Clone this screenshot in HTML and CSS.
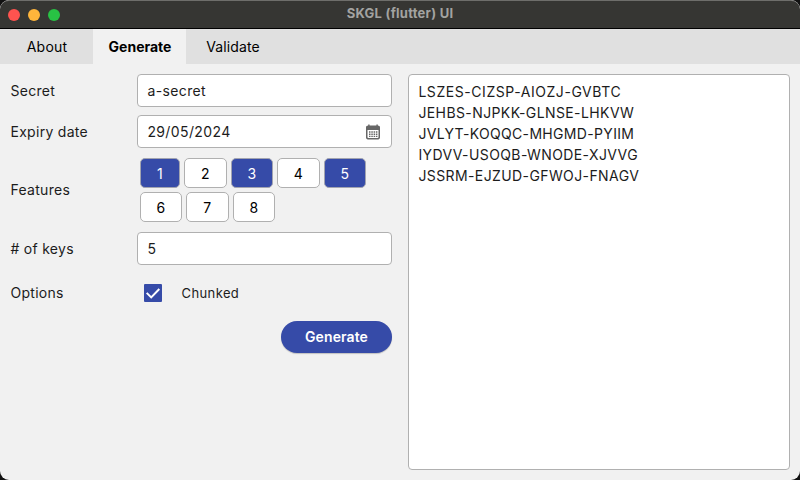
FILE: index.html
```html
<!DOCTYPE html>
<html lang="en">
<head>
<meta charset="utf-8">
<title>SKGL (flutter) UI</title>
<link rel="stylesheet" href="styles.css">
</head>
<body>
<div class="window">
  <header class="titlebar">
    <div class="lights"><i class="close"></i><i class="minimize"></i><i class="zoom"></i></div>
    <span class="title">SKGL (flutter) UI</span>
  </header>
  <nav class="tabs">
    <span class="tab about">About</span>
    <span class="tab active">Generate</span>
    <span class="tab validate">Validate</span>
  </nav>
  <main class="content">
    <form class="form">
      <span class="label">Secret</span>
      <div class="field">a-secret</div>
      <span class="label">Expiry date</span>
      <div class="field date"><span>29/05/2024</span>
        <svg class="calendar" width="14" height="16" viewBox="0 0 14 16">
          <path fill="#666" fill-rule="evenodd" d="M2.2 1.6V.4h1.4v1.2h6.8V.4h1.4v1.2c1.3 0 2.2.7 2.2 1.8v10.2c0 1-.8 1.8-1.8 1.8H1.8c-1 0-1.8-.8-1.8-1.8V3.4C0 2.300.9 1.600 2.200 1.600zM1.500 6v7.200c0 .5.300.8.8.8h9.400c.5 0 .8-.3.8-.8V6z"/>
          <path fill="#666" d="M3 7.300h1.500v1.400H3zM5.300 7.300h1.500v1.400H5.300zM7.600 7.300h1.500v1.400H7.600zM9.900 7.300h1.500v1.400H9.900zM3 9.500h1.500v1.400H3zM5.300 9.500h1.500v1.400H5.300zM7.600 9.500h1.500v1.400H7.600zM9.900 9.500h1.500v1.400H9.900zM3 11.700h1.500v1.400H3zM5.300 11.700h1.500v1.400H5.300zM7.600 11.700h1.500v1.400H7.600zM9.900 11.700h1.500v1.400H9.900z"/>
        </svg>
      </div>
      <span class="label features-label">Features</span>
      <div class="features">
        <span class="chip one on">1</span><span class="chip">2</span><span class="chip on">3</span><span class="chip">4</span><span class="chip on">5</span>
        <span class="chip">6</span><span class="chip">7</span><span class="chip">8</span>
      </div>
      <span class="label"># of keys</span>
      <div class="field">5</div>
      <span class="label options-label">Options</span>
      <div class="option">
        <svg class="check" width="18" height="18" viewBox="0 0 18 18"><rect width="18" height="18" rx="1" fill="#364ba8"/><path d="M2.700 8.900l4.500 4.500 8.100-8.400" fill="none" stroke="#fff" stroke-width="2"/></svg>
        <span>Chunked</span>
      </div>
      <span class="submit">Generate</span>
    </form>
    <div class="output">
      <div class="key-first">LSZES-CIZSP-AIOZJ-GVBTC</div>
      <div>JEHBS-NJPKK-GLNSE-LHKVW</div>
      <div class="key-narrow">JVLYT-KOQQC-MHGMD-PYIIM</div>
      <div>IYDVV-USOQB-WNODE-XJVVG</div>
      <div>JSSRM-EJZUD-GFWOJ-FNAGV</div>
    </div>
  </main>
</div>
</body>
</html>
```
FILE: styles.css
```css
* { box-sizing: border-box; }
body {
  margin: 0;
  background: #111;
  font-family: Inter, sans-serif;
  font-size: 14px;
  color: #1c1c1c;
}
.window {
  display: flex;
  flex-direction: column;
  height: 480px;
  overflow: hidden;
  border-radius: 9px;
  background: #f1f1f1;
}
.titlebar {
  display: grid;
  grid-template-columns: 1fr auto 1fr;
  align-items: center;
  height: 29px;
  background: #363633;
  border-top: 1px solid #6e6e6b;
  border-bottom: 1px solid #000;
  border-radius: 9px 9px 0 0;
}
.lights { display: flex; gap: 8px; padding-left: 8px; }
.lights i { width: 12px; height: 12px; border-radius: 50%; }
.close { background: #ff534f; }
.minimize { background: #ffb53b; }
.zoom { background: #28c244; }
.title {
  padding-bottom: 3px;
  font-size: 13px;
  font-weight: 700;
  letter-spacing: .25px;
  color: #a3a3a1;
}
.tabs {
  display: flex;
  height: 35px;
  background: #e0e0e0;
  color: #000;
}
.tab { display: flex; align-items: center; justify-content: center; }
.about { width: 93px; letter-spacing: .2px; padding-left: 1px; }
.active { width: 93px; padding-left: 1px; background: #f1f1f1; font-weight: 700; }
.validate { width: 93px; letter-spacing: .1px; padding-left: 1px; }
.content {
  flex: 1;
  display: grid;
  grid-template-columns: 382px 382px;
  gap: 16px;
  padding: 10px;
}
.form {
  display: grid;
  grid-template-columns: 127px 255px;
  grid-template-rows: 41px 43px 74px 42px 47px 43px;
  align-items: start;
}
.label { padding-left: .5px; letter-spacing: .28px; line-height: 33px; }
.features-label { line-height: 64px; }
.options-label { line-height: 38px; }
.field, .output {
  background: #fff;
  border: 1px solid #b0b0b0;
  border-radius: 4px;
}
.field { height: 33px; padding: 0 9.4px; letter-spacing: .38px; line-height: 31px; }
.date { display: flex; justify-content: space-between; align-items: center; padding-right: 11px; }
.features {
  display: flex;
  flex-wrap: wrap;
  gap: 4px;
  width: 240px;
  padding-left: 2.5px;
}
.chip {
  display: flex;
  align-items: center;
  justify-content: center;
  width: 42.5px;
  height: 30px;
  padding-top: 1px;
  background: #fff;
  border: 1px solid #b0b0b0;
  border-radius: 5px;
  color: #000;
}
.one { width: 40.5px; }
.on { background: #364ba8; color: #fff; border-color: #a2a4b0; }
.option {
  display: flex;
  align-items: center;
  gap: 19.5px;
  height: 38px;
  padding-left: 7px;
  font-size: 13px;
  letter-spacing: .4px;
}
.submit {
  grid-column: 2;
  justify-self: end;
  width: 111px;
  height: 32px;
  border-radius: 16px;
  background: #364ba8;
  color: #fff;
  font-weight: 600;
  letter-spacing: .1px;
  line-height: 32px;
  text-align: center;
  box-shadow: 0 1px 1px #0003;
}
.output {
  height: 396px;
  padding: 6px 9.4px;
  letter-spacing: .4px;
  line-height: 21px;
}
.key-first { letter-spacing: .56px; }
.key-narrow { letter-spacing: .33px; }
```
